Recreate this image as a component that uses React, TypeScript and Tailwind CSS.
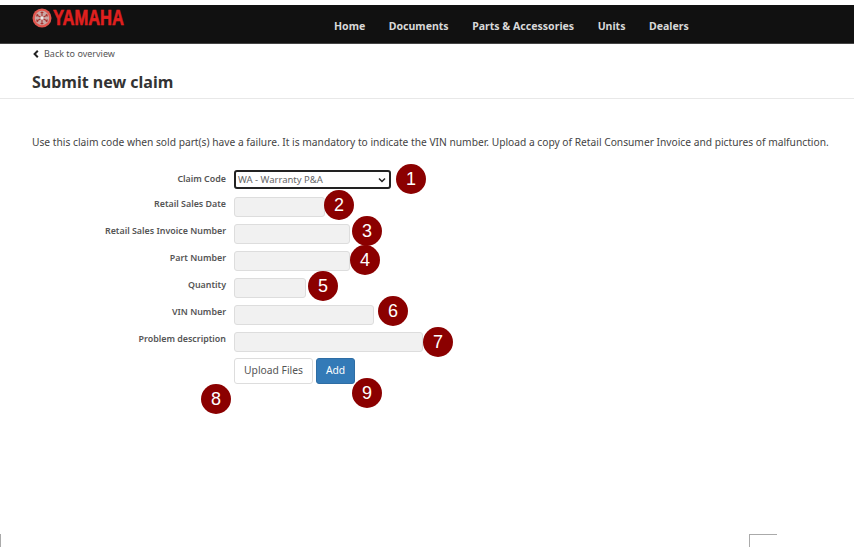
const NAV_ITEMS = ['Home', 'Documents', 'Parts & Accessories', 'Units', 'Dealers']

const FIELDS = [
  { label: 'Retail Sales Date', width: 'w-[91px]' },
  { label: 'Retail Sales Invoice Number', width: 'w-[116px]' },
  { label: 'Part Number', width: 'w-[116px]' },
  { label: 'Quantity', width: 'w-[72px]' },
  { label: 'VIN Number', width: 'w-[140px]' },
  { label: 'Problem description', width: 'w-[189px]' },
]

const MARKERS = [
  { n: 1, pos: 'left-[396px] top-[164px]' },
  { n: 2, pos: 'left-[324px] top-[190px]' },
  { n: 3, pos: 'left-[352px] top-[216px]' },
  { n: 4, pos: 'left-[350px] top-[245px]' },
  { n: 5, pos: 'left-[308px] top-[271px]' },
  { n: 6, pos: 'left-[378px] top-[296px]' },
  { n: 7, pos: 'left-[423px] top-[327px]' },
  { n: 8, pos: 'left-[201px] top-[384px]' },
  { n: 9, pos: 'left-[352px] top-[378px]' },
]

function Logo() {
  return (
    <div className="flex w-[92px] items-center pt-[2px]">
      <svg width="20" height="20" viewBox="0 0 20 20" className="shrink-0">
        <circle cx="10" cy="10" r="9.5" fill="#e2574f" />
        <circle cx="10" cy="10" r="7.2" fill="#c9a8a6" />
        {[0, 60, 120, 180, 240, 300].map((a) => (
          <path key={a} d="M10 10V3.5M8.6 4.5h2.8" stroke="#a8322e" strokeWidth="1.1" fill="none" transform={`rotate(${a} 10 10)`} />
        ))}
        <circle cx="10" cy="10" r="1.8" fill="#eee" />
      </svg>
      <span className="ml-[1px] origin-left scale-x-[0.75] font-['Liberation_Sans',sans-serif] text-[22px] leading-none font-bold text-[#e0201f] [-webkit-text-stroke:0.6px_#e0201f]">
        YAMAHA
      </span>
    </div>
  )
}

export default function App() {
  return (
    <div className="relative h-[547px] w-[854px] overflow-hidden bg-white font-['Noto_Sans',sans-serif] text-[#555]">
      <header className="mt-[5px] flex h-[39px] items-start border-b-[1px] border-[#444] bg-[#111] pl-[32px]">
        <Logo />
        <nav className="ml-[210px] mt-[14px] flex gap-[23.5px] text-[10.55px] leading-[14px] font-bold whitespace-nowrap text-[#d8d8d8]">
          {NAV_ITEMS.map((item) => (
            <a key={item}>{item}</a>
          ))}
        </nav>
      </header>

      <div className="flex items-center gap-[5px] pl-[33px] pt-[3px] text-[9px] leading-[13px] text-[#555]">
        <svg width="6" height="8" viewBox="0 0 6 8">
          <path d="M4.8 .8 1.6 4l3.2 3.2" stroke="#222" strokeWidth="2" fill="none" />
        </svg>
        <a>Back to overview</a>
      </div>

      <div className="mt-[11px] h-[28px] border-b border-[#e8e8e8] pl-[32px]">
        <h1 className="text-[16px] leading-[22px] font-bold text-[#333]">Submit new claim</h1>
      </div>

      <p className="mt-[36px] pl-[32px] text-[10.23px] leading-[14px] whitespace-nowrap text-[#444]">
        Use this claim code when sold part(s) have a failure. It is mandatory to indicate the VIN number. Upload a copy of Retail Consumer Invoice and pictures of malfunction.
      </p>

      <form className="mt-[21px] flex flex-col">
        <div className="flex h-[27px] items-start">
          <label className="w-[226px] pt-[2px] text-right text-[8.9px] leading-[14px] font-semibold text-[#555]">Claim Code</label>
          <div className="relative ml-[8px] flex h-[19px] w-[157px] items-center rounded-[3px] border-2 border-[#222] pl-[2px] pt-px text-[9.5px] text-[#666]">
            WA - Warranty P&amp;A
            <svg className="absolute right-[3px] top-[5px]" width="8" height="6" viewBox="0 0 8 6">
              <path d="M1 1.5 4 4.5l3-3" stroke="#222" strokeWidth="1.5" fill="none" />
            </svg>
          </div>
        </div>
        {FIELDS.map((field) => (
          <div key={field.label} className="flex h-[27px] items-start">
            <label className="w-[226px] text-right text-[8.9px] leading-[14px] font-semibold text-[#555]">{field.label}</label>
            <div className={`ml-[8px] h-[20px] rounded-[3px] border border-[#ddd] bg-[#f1f1f1] ${field.width}`} />
          </div>
        ))}
        <div className="-mt-px flex gap-[3px] pl-[234px]">
          <button type="button" className="h-[26px] w-[79px] rounded-[3px] border border-[#ddd] bg-white text-[10.3px] text-[#555]">Upload Files</button>
          <button type="button" className="h-[26px] w-[39px] rounded-[3px] border border-[#2e6da4] bg-[#337ab7] text-[10.3px] text-white">Add</button>
        </div>
      </form>

      {MARKERS.map((m) => (
        <div key={m.n} className={`absolute flex h-[30px] w-[30px] items-center justify-center rounded-full bg-[#8b0000] font-['Liberation_Sans',sans-serif] text-[18px] text-white ${m.pos}`}>
          {m.n}
        </div>
      ))}

      <div className="absolute bottom-0 left-0 h-[13px] border-l border-[#aaa]" />
      <div className="absolute bottom-0 left-[749px] h-[13px] w-[28px] border-l border-t border-[#aaa]" />
    </div>
  )
}
